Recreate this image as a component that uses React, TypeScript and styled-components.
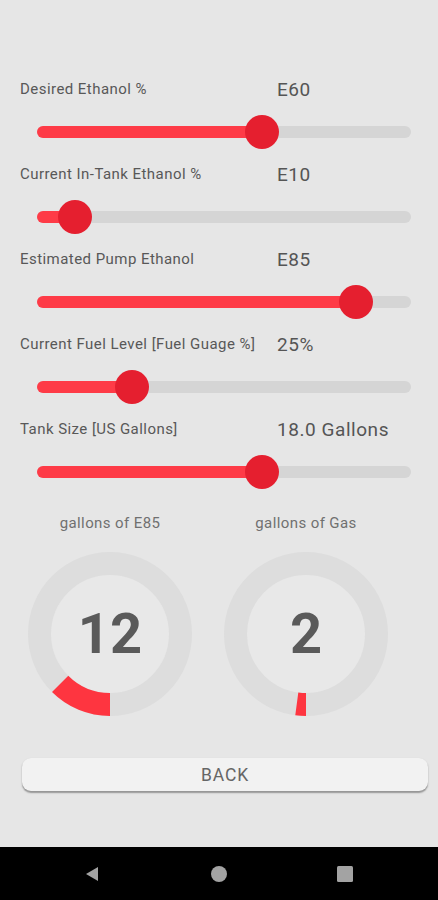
import React from "react";
import styled, { createGlobalStyle } from "styled-components";

const Global = createGlobalStyle`
  html, body { margin: 0; padding: 0; background: #e6e6e6; }
  body { font-family: Roboto, "Noto Sans", "Liberation Sans", sans-serif; }
  * { box-sizing: border-box; }
`;

const Screen = styled.div`
  width: 438px;
  height: 900px;
  background: #e6e6e6;
  display: flex;
  flex-direction: column;
  overflow: hidden;
`;

const Sliders = styled.div`
  padding-top: 74px;
  display: flex;
  flex-direction: column;
`;

const Section = styled.div`
  height: 85px;
  display: flex;
  flex-direction: column;
`;

const Header = styled.div`
  height: 30px;
  display: grid;
  grid-template-columns: 257px 1fr;
  align-items: center;
  padding-left: 20px;
`;

const Label = styled.span`
  font-size: 15px;
  letter-spacing: 0.45px;
  color: #585858;
  white-space: nowrap;
`;

const Value = styled.span`
  font-size: 19px;
  letter-spacing: 0.55px;
  color: #555;
  white-space: nowrap;
`;

const SliderArea = styled.div`
  height: 55px;
  display: flex;
  align-items: center;
  padding: 0 27px 0 37px;
`;

const Track = styled.div`
  position: relative;
  width: 100%;
  height: 12px;
  border-radius: 6px;
  background: #d5d5d5;
`;

const Fill = styled.div`
  height: 100%;
  border-radius: 6px 0 0 6px;
  background: #fe3b47;
`;

const Thumb = styled.div`
  position: absolute;
  top: 50%;
  width: 34px;
  height: 34px;
  margin: -17px 0 0 -16px;
  border-radius: 50%;
  background: #e51f2f;
`;

const GaugeRow = styled.div`
  padding: 14px 0 0 28px;
  display: grid;
  grid-template-columns: 164px 164px;
  column-gap: 32px;
`;

const GaugeCol = styled.div`
  display: flex;
  flex-direction: column;
  align-items: center;
  gap: 19px;
`;

const GaugeLabel = styled.div`
  height: 20px;
  line-height: 20px;
  font-size: 15px;
  letter-spacing: 0.4px;
  color: #707070;
  white-space: nowrap;
`;

const GaugeBox = styled.div`
  position: relative;
  width: 164px;
  height: 164px;
`;

const GaugeNumber = styled.div`
  position: absolute;
  inset: 0;
  display: flex;
  align-items: center;
  justify-content: center;
  font-size: 56px;
  font-weight: 700;
  color: #5a5a5a;
`;

const BackButton = styled.button`
  margin: 42px 10px 0 22px;
  height: 33px;
  border: none;
  border-radius: 9px;
  background: #f2f2f2;
  box-shadow: 0 1.5px 1.5px rgba(0, 0, 0, 0.35);
  font-family: Roboto, "Noto Sans", sans-serif;
  font-size: 17.5px;
  color: #666;
  letter-spacing: 0.9px;
  padding: 0;
`;

const NavBar = styled.div`
  margin-top: auto;
  height: 53px;
  background: #000;
  display: grid;
  grid-template-columns: 184px 126px 1fr;
  align-items: center;
`;

const NavIcon = styled.div<{ $center: number }>`
  display: flex;
  justify-content: center;
  width: ${(p) => p.$center * 2}px;
`;

type SliderProps = { label: string; value: string; pct: number };

const SliderSection: React.FC<SliderProps> = ({ label, value, pct }) => (
  <Section>
    <Header>
      <Label>{label}</Label>
      <Value>{value}</Value>
    </Header>
    <SliderArea>
      <Track>
        <Fill style={{ width: `${pct}%` }} />
        <Thumb style={{ left: `${pct}%` }} />
      </Track>
    </SliderArea>
  </Section>
);

const Gauge: React.FC<{ value: number; deg: number }> = ({ value, deg }) => {
  const cx = 82;
  const cy = 82;
  const r = 70.5;
  const a0 = Math.PI / 2;
  const a1 = a0 + (deg * Math.PI) / 180;
  const x0 = cx + r * Math.cos(a0);
  const y0 = cy + r * Math.sin(a0);
  const x1 = cx + r * Math.cos(a1);
  const y1 = cy + r * Math.sin(a1);
  return (
    <GaugeBox>
      <svg width="164" height="164" viewBox="0 0 164 164">
        <circle cx={cx} cy={cy} r={59} fill="#e8e8e8" />
        <circle cx={cx} cy={cy} r={r} fill="none" stroke="#dddddd" strokeWidth={23} />
        <path
          d={`M ${x0} ${y0} A ${r} ${r} 0 0 1 ${x1} ${y1}`}
          fill="none"
          stroke="#fe3540"
          strokeWidth={23}
        />
      </svg>
      <GaugeNumber>{value}</GaugeNumber>
    </GaugeBox>
  );
};

export default function App() {
  return (
    <>
      <Global />
      <Screen>
        <Sliders>
          <SliderSection label="Desired Ethanol %" value="E60" pct={60} />
          <SliderSection label="Current In-Tank Ethanol %" value="E10" pct={10} />
          <SliderSection label="Estimated Pump Ethanol" value="E85" pct={85} />
          <SliderSection label="Current Fuel Level [Fuel Guage %]" value="25%" pct={25} />
          <SliderSection label="Tank Size [US Gallons]" value="18.0 Gallons" pct={60} />
        </Sliders>
        <GaugeRow>
          <GaugeCol>
            <GaugeLabel>gallons of E85</GaugeLabel>
            <Gauge value={12} deg={45} />
          </GaugeCol>
          <GaugeCol>
            <GaugeLabel>gallons of Gas</GaugeLabel>
            <Gauge value={2} deg={7.5} />
          </GaugeCol>
        </GaugeRow>
        <BackButton>BACK</BackButton>
        <NavBar>
          <NavIcon $center={92}>
            <svg width="18" height="18" viewBox="0 0 18 18">
              <path d="M15 2 L15 16 L3 9 Z" fill="#a3a3a3" />
            </svg>
          </NavIcon>
          <NavIcon $center={35}>
            <svg width="18" height="18" viewBox="0 0 18 18">
              <circle cx="9" cy="9" r="8" fill="#a3a3a3" />
            </svg>
          </NavIcon>
          <NavIcon $center={35}>
            <svg width="18" height="18" viewBox="0 0 18 18">
              <rect x="1" y="1" width="16" height="16" rx="1.5" fill="#a3a3a3" />
            </svg>
          </NavIcon>
        </NavBar>
      </Screen>
    </>
  );
}
